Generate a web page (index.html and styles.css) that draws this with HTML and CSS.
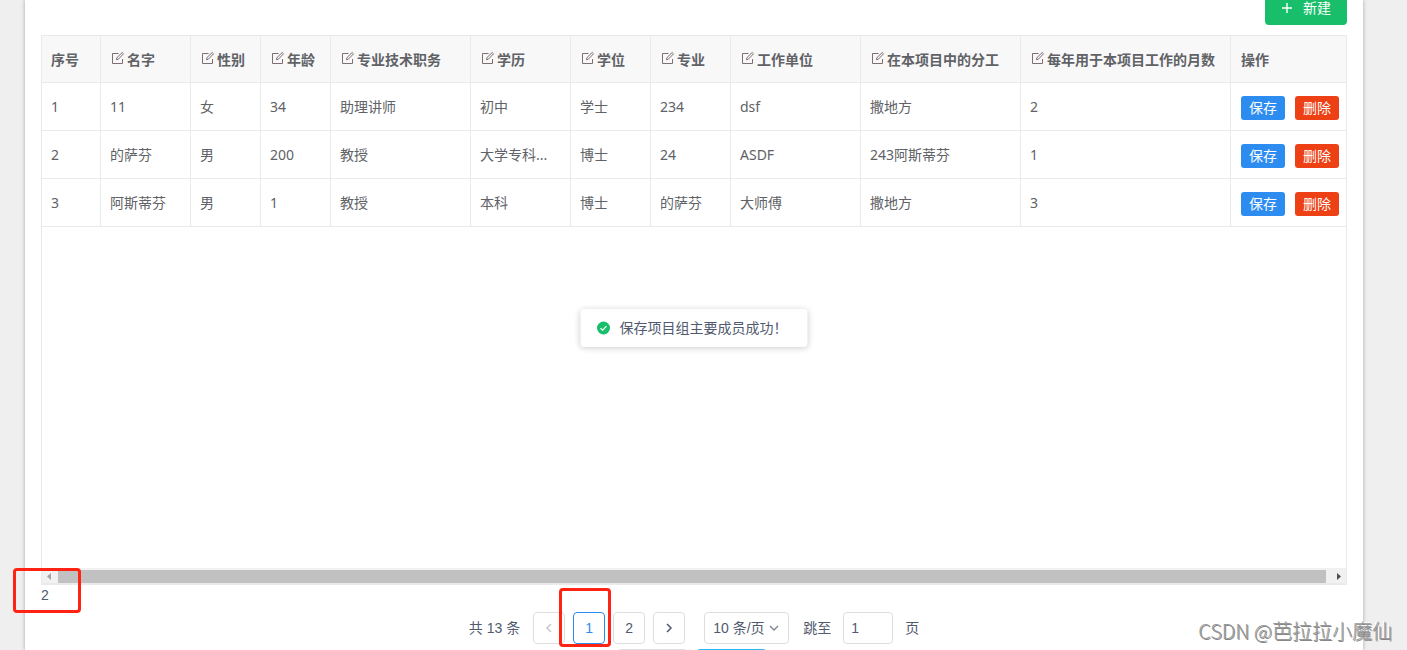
FILE: index.html
```
<!DOCTYPE html>
<html lang="zh-CN">
<head>
<meta charset="utf-8">
<title>项目组主要成员</title>
<link rel="stylesheet" href="styles.css">
</head>
<body>
<svg class="sprite" aria-hidden="true">
  <symbol id="edit" viewBox="0 0 14 14"><path d="M7.500 2.500h-6v10h10V8M5.500 8.800l.5-2.300L11.200 1.500l1.300 1.300L7.400 8.200z"/></symbol>
</svg>
<main class="panel">
  <div class="toolbar">
    <button class="create" type="button">
      <svg width="12" height="12" viewBox="0 0 12 12" aria-hidden="true"><path d="M6 1v10M1 6h10"/></svg>
      <span>新建</span>
    </button>
  </div>

  <section class="grid">
    <table class="members">
      <colgroup>
        <col class="w-index"><col class="w-name"><col class="w-70"><col class="w-70"><col class="w-title"><col class="w-edu"><col class="w-80"><col class="w-80"><col class="w-unit"><col class="w-task"><col class="w-months"><col>
      </colgroup>
      <thead>
        <tr>
          <th>序号</th>
          <th><svg class="edit"><use href="#edit"/></svg>名字</th>
          <th><svg class="edit"><use href="#edit"/></svg>性别</th>
          <th><svg class="edit"><use href="#edit"/></svg>年龄</th>
          <th><svg class="edit"><use href="#edit"/></svg>专业技术职务</th>
          <th><svg class="edit"><use href="#edit"/></svg>学历</th>
          <th><svg class="edit"><use href="#edit"/></svg>学位</th>
          <th><svg class="edit"><use href="#edit"/></svg>专业</th>
          <th><svg class="edit"><use href="#edit"/></svg>工作单位</th>
          <th><svg class="edit"><use href="#edit"/></svg>在本项目中的分工</th>
          <th><svg class="edit"><use href="#edit"/></svg>每年用于本项目工作的月数</th>
          <th>操作</th>
        </tr>
      </thead>
      <tbody>
        <tr>
          <td>1</td><td>11</td><td>女</td><td>34</td><td>助理讲师</td><td>初中</td><td>学士</td><td>234</td><td>dsf</td><td>撒地方</td><td>2</td>
          <td><div class="actions"><button class="save" type="button">保存</button><button class="delete" type="button">删除</button></div></td>
        </tr>
        <tr>
          <td>2</td><td>的萨芬</td><td>男</td><td>200</td><td>教授</td><td>大学专科...</td><td>博士</td><td>24</td><td>ASDF</td><td>243阿斯蒂芬</td><td>1</td>
          <td><div class="actions"><button class="save" type="button">保存</button><button class="delete" type="button">删除</button></div></td>
        </tr>
        <tr>
          <td>3</td><td>阿斯蒂芬</td><td>男</td><td>1</td><td>教授</td><td>本科</td><td>博士</td><td>的萨芬</td><td>大师傅</td><td>撒地方</td><td>3</td>
          <td><div class="actions"><button class="save" type="button">保存</button><button class="delete" type="button">删除</button></div></td>
        </tr>
      </tbody>
    </table>
    <div class="scrollbar">
      <svg class="arrow-left" width="16" height="13" viewBox="0 0 16 13" aria-hidden="true"><path d="M9 3v7L5 6.500z"/></svg>
      <div class="thumb"></div>
      <svg class="arrow-right" width="20" height="13" viewBox="0 0 20 13" aria-hidden="true"><path d="M11 3v7l4-3.500z"/></svg>
    </div>
  </section>

  <p class="current">2</p>

  <nav class="pager" aria-label="分页">
    <span class="total">共 13 条</span>
    <div class="pages">
      <button class="page" type="button" disabled aria-label="上一页"><svg width="12" height="12" viewBox="0 0 12 12"><path d="M8 2L4 6l4 4"/></svg></button>
      <button class="page active" type="button" aria-current="page">1</button>
      <button class="page" type="button">2</button>
      <button class="page" type="button" aria-label="下一页"><svg width="12" height="12" viewBox="0 0 12 12"><path d="M4 2l4 4-4 4"/></svg></button>
    </div>
    <div class="size">
      <select aria-label="每页条数"><option>10 条/页</option></select>
      <svg width="10" height="10" viewBox="0 0 10 10" aria-hidden="true"><path d="M1 3l4 4 4-4"/></svg>
    </div>
    <label class="jump">跳至<input type="text" value="1">页</label>
  </nav>

  <div class="footer">
    <button class="plain" type="button" aria-label="取消"></button>
    <button class="info" type="button" aria-label="确定"></button>
  </div>

  <div class="toast" role="status">
    <svg width="14" height="14" viewBox="0 0 14 14" aria-hidden="true"><circle cx="7" cy="7" r="6.500"/><path d="M4 7.200l2.200 2L10 5.200"/></svg>
    <span>保存项目组主要成员成功！</span>
  </div>
</main>
<div class="mark mark-index"></div>
<div class="mark mark-page"></div>
<div class="watermark">CSDN @芭拉拉小魔仙</div>
</body>
</html>
```
FILE: styles.css
```
* { box-sizing: border-box; }

body {
  margin: 0;
  height: 100vh;
  overflow: hidden;
  position: relative;
  display: flex;
  background: #efefef;
  color: #515a6e;
  font: 14px/20px "Liberation Sans", "Noto Sans CJK SC", sans-serif;
}

button, input, select { font: inherit; color: inherit; margin: 0; }
.sprite { position: absolute; width: 0; height: 0; }

.panel {
  position: relative;
  flex: 1;
  min-width: 0;
  margin: 0 44px 0 25px;
  padding: 0 16px;
  background: #fff;
  box-shadow: 0 0 4px rgba(0, 0, 0, 0.3);
}

/* The toolbar is partly scrolled out of view. */
.toolbar {
  display: flex;
  justify-content: flex-end;
  margin-top: -7px;
  margin-bottom: 10px;
}

.create {
  display: flex;
  align-items: center;
  gap: 10px;
  height: 32px;
  padding: 0 16px 2px;
  border: 0;
  border-radius: 4px;
  background: #19be6b;
  color: #fff;
}
.create svg { fill: none; stroke: #fff; stroke-width: 1.4; }

.grid {
  display: flex;
  flex-direction: column;
  height: 550px;
  border: 1px solid #e8eaec;
  border-bottom-width: 2px;
}

.members {
  width: 100%;
  table-layout: fixed;
  border-collapse: separate;
  border-spacing: 0;
  color: #606266;
  font-family: "Noto Sans", "Noto Sans CJK SC", sans-serif;
}
.w-index { width: 59px; }
.w-name { width: 90px; }
.w-70 { width: 70px; }
.w-title { width: 140px; }
.w-edu { width: 100px; }
.w-80 { width: 80px; }
.w-unit { width: 130px; }
.w-task { width: 160px; }
.w-months { width: 210px; }

.members th, .members td {
  height: 48px;
  padding: 0 0 0 9px;
  border-right: 1px solid #e8eaec;
  border-bottom: 1px solid #e8eaec;
  text-align: left;
  white-space: nowrap;
}
.members th { height: 47px; padding-top: 2px; background: #f8f8f9; font-weight: bold; }
.members th:last-child, .members td:last-child { border-right: 0; padding-left: 10px; }

.edit {
  width: 14px;
  height: 14px;
  margin: 0 2px 0 1px;
  fill: none;
  stroke: #806f70;
}

.actions { display: flex; gap: 10px; padding-top: 3px; }
.actions button {
  width: 44px;
  height: 24px;
  padding: 0;
  border: 0;
  border-radius: 3px;
  color: #fff;
}
.save { background: #2d8cf0; }
.actions .delete { background: #ed4014; }

.scrollbar {
  display: flex;
  margin-top: auto;
  padding-top: 2px;
  background: #f1f1f1;
}
.thumb { flex: 1; background: #c1c1c1; }
.arrow-left { fill: #a3a3a3; }
.arrow-right { fill: #505050; }

.current { margin: 0; }

.pager {
  display: flex;
  justify-content: center;
  align-items: center;
  margin-top: 7px;
}
.pages { display: flex; gap: 8px; margin: 0 19px 0 13px; }
.page {
  display: flex;
  align-items: center;
  justify-content: center;
  width: 32px;
  height: 32px;
  padding: 0;
  border: 1px solid #dcdee2;
  border-radius: 4px;
  background: #fff;
}
.page svg { fill: none; stroke: #515a6e; stroke-width: 1.5; }
.page:disabled svg { stroke: #c5c8ce; }
.page.active { border-color: #2d8cf0; color: #2d8cf0; }

.size { position: relative; margin-right: 14px; }
.size select {
  display: block;
  appearance: none;
  width: 85px;
  height: 32px;
  padding: 0 8px;
  border: 1px solid #dcdee2;
  border-radius: 4px;
  background: #fff;
}
.size svg {
  position: absolute;
  right: 10px;
  top: 11px;
  fill: none;
  stroke: #808695;
  stroke-width: 1.4;
  pointer-events: none;
}

.jump { display: flex; align-items: center; gap: 12px; }
.jump input {
  width: 50px;
  height: 32px;
  padding: 0 7px;
  border: 1px solid #dcdee2;
  border-radius: 4px;
}

.footer { display: flex; justify-content: center; gap: 8px; margin-top: 5px; padding-right: 4px; }
.footer button {
  width: 71px;
  height: 32px;
  border: 1px solid #dcdee2;
  border-radius: 4px;
  background: #fff;
}
.footer .info { border-color: #2db7f5; background: #2db7f5; }

.toast {
  position: absolute;
  left: 50%;
  top: 309px;
  transform: translateX(-50%);
  display: flex;
  align-items: center;
  gap: 9px;
  height: 38px;
  padding: 0 20px 0 16px;
  border-radius: 4px;
  background: #fff;
  box-shadow: 0 1px 6px rgba(0, 0, 0, 0.2);
  white-space: nowrap;
}
.toast circle { fill: #19be6b; }
.toast path { fill: none; stroke: #fff; stroke-width: 1.2; }

.mark {
  position: absolute;
  border: 3px solid #ff2313;
  border-radius: 4px;
  pointer-events: none;
}
.mark-index { left: 13px; top: 568px; width: 68px; height: 45px; }
.mark-page { left: 559px; top: 588px; width: 52px; height: 59px; }

.watermark {
  position: absolute;
  right: 15px;
  bottom: 7px;
  color: #999;
  font: 300 20px/24px "Noto Sans CJK SC", sans-serif;
  text-shadow: 1px 1px 0 #888, -1px -1px 0 #fff;
}
```
